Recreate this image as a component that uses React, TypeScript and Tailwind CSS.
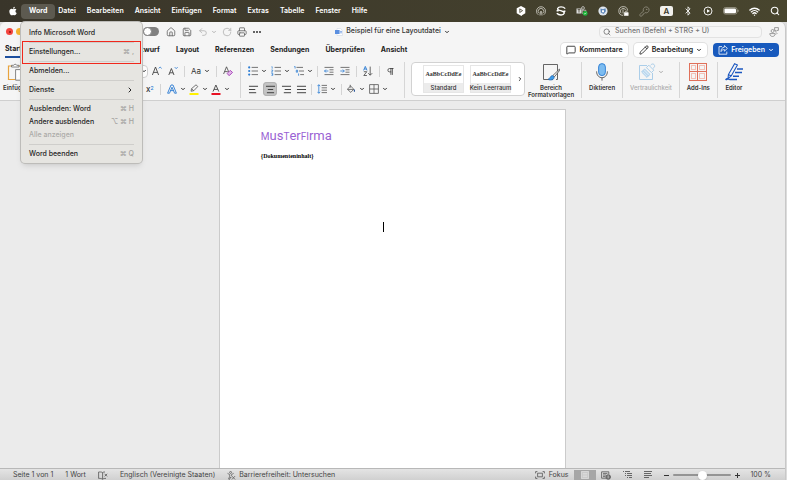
import type { ReactNode } from "react";
import {
  AlignCenter,
  AlignJustify,
  AlignLeft,
  AlignRight,
  Bluetooth,
  ChevronDown,
  ChevronRight,
  House,
  KeyRound,
  MessageSquare,
  Pencil,
  Pilcrow,
  Printer,
  RotateCw,
  Save,
  Search,
  Undo2,
  Wifi,
} from "lucide-react";
import { FaApple } from "react-icons/fa";

const menus = [
  "Datei",
  "Bearbeiten",
  "Ansicht",
  "Einfügen",
  "Format",
  "Extras",
  "Tabelle",
  "Fenster",
  "Hilfe",
];

const tabs = [
  "Einfügen",
  "Zeichnen",
  "Entwurf",
  "Layout",
  "Referenzen",
  "Sendungen",
  "Überprüfen",
  "Ansicht",
];

type WordMenuItem = {
  label: string;
  keys?: string;
  submenu?: boolean;
  disabled?: boolean;
  marked?: boolean;
};

const wordMenu: WordMenuItem[][] = [
  [{ label: "Info Microsoft Word" }],
  [{ label: "Einstellungen...", keys: "⌘ ,", marked: true }],
  [{ label: "Abmelden..." }],
  [{ label: "Dienste", submenu: true }],
  [
    { label: "Ausblenden: Word", keys: "⌘ H" },
    { label: "Andere ausblenden", keys: "⌥ ⌘ H" },
    { label: "Alle anzeigen", disabled: true },
  ],
  [{ label: "Word beenden", keys: "⌘ Q" }],
];

function Chevron() {
  return <ChevronDown className="size-[6px] shrink-0" strokeWidth={4} />;
}

function Tool({
  label,
  menu,
  active,
  children,
}: {
  label: string;
  menu?: boolean;
  active?: boolean;
  children: ReactNode;
}) {
  return (
    <button
      type="button"
      aria-label={label}
      className={
        active
          ? "flex h-[14px] w-[14px] shrink-0 items-center justify-center rounded-sm bg-[#c4c4c4] ring-1 ring-inset ring-[#b2b2b2]"
          : "flex h-[14px] shrink-0 items-center gap-[3px]"
      }
    >
      {children}
      {menu ? <Chevron /> : null}
    </button>
  );
}

function Divider() {
  return <span className="h-[11px] w-px shrink-0 bg-[#d4d4d4]" />;
}

function GroupDivider() {
  return <span className="h-[36px] w-px shrink-0 bg-[#d6d6d6]" />;
}

function ListIcon({ kind }: { kind: "bullet" | "number" | "multi" }) {
  return (
    <svg viewBox="0 0 10 10" className="size-[10px]" fill="none">
      {kind === "bullet" ? (
        <g fill="#2b7cd3">
          <circle cx="1.2" cy="1.4" r="1.1" />
          <circle cx="1.2" cy="5" r="1.1" />
          <circle cx="1.2" cy="8.6" r="1.1" />
        </g>
      ) : null}
      {kind === "number" ? (
        <g stroke="#2b7cd3" strokeWidth=".7">
          <path d="M.6.7h.6v2M.3 4h1.4v1L.4 6h1.5M.4 7.4h1.4v2H.4m.5-1h.9" />
        </g>
      ) : null}
      {kind === "multi" ? (
        <g stroke="#2b7cd3" strokeWidth=".8">
          <path d="M.3.5h.8v2M2.3 4.2h1.3v2H2.3zM4.6 7.5v2.2" />
        </g>
      ) : null}
      {kind === "multi" ? (
        <path d="M2.5 1.4H9M5 5h5M6.2 8.6H10" stroke="#555" strokeWidth=".8" />
      ) : (
        <path d="M3.6 1.4H10M3.6 5H10M3.6 8.6H10" stroke="#555" strokeWidth=".8" />
      )}
    </svg>
  );
}

function IndentIcon({ increase }: { increase?: boolean }) {
  return (
    <svg viewBox="0 0 10 10" className="size-[10px]" fill="none" strokeWidth=".8">
      <path d="M.5 1.4h9M5.5 3.8h4M5.5 6.2h4M.5 8.6h9" stroke="#555" />
      <path
        d={increase ? "M.3 5h4M2.8 3.5 4.3 5 2.8 6.5" : "M4.4 5H.5M2 3.5.5 5 2 6.5"}
        stroke="#2b7cd3"
      />
    </svg>
  );
}

function FontSizeIcon({ down }: { down?: boolean }) {
  return (
    <svg viewBox="0 0 10 10" className="size-[10px]" fill="none">
      <path
        d={down ? "M.8 9 3.4 2.5 6 9M1.7 6.8h3.4" : "M.4 9 3.5 1 6.6 9M1.5 6.4h4"}
        stroke="#444"
        strokeWidth=".9"
      />
      <path
        d={down ? "M6.8 1.2 8.2 2.6 9.6 1.2" : "M6.8 2.4 8.2 1 9.6 2.4"}
        stroke="#2b7cd3"
        strokeWidth=".9"
      />
    </svg>
  );
}

function ClearFormatIcon() {
  return (
    <svg viewBox="0 0 10 10" className="size-[10px]" fill="none">
      <path d="M.6 8 3.5.8 5.8 6M1.6 5.6h3.2" stroke="#444" strokeWidth=".8" />
      <path d="m4.2 7.4 3-3 2.3 2-3 3H5.8z" stroke="#a33bb5" strokeWidth=".9" fill="#e3b8ea" />
    </svg>
  );
}

function OutlineAIcon() {
  return (
    <svg viewBox="0 0 10 10" className="size-[10px]" fill="none">
      <path
        d="M.6 9.2 4 1h2l3.4 8.2H7.6L5 3.2 2.5 9.2zM3.4 6.6h3.2"
        stroke="#2b7cd3"
        strokeWidth=".9"
        strokeLinejoin="round"
      />
    </svg>
  );
}

function HighlightIcon() {
  return (
    <svg viewBox="0 0 10 11" className="h-[11px] w-[10px]" fill="none">
      <path d="m2 7.2.6-2.6L7 .8l1.8 1.7-4 4.2zM2.6 4.7l2.1 2" stroke="#555" strokeWidth=".8" />
      <path d="M.5 9h9v2h-9z" fill="#fff100" />
    </svg>
  );
}

function FontColorIcon() {
  return (
    <svg viewBox="0 0 10 11" className="h-[11px] w-[10px]" fill="none">
      <path d="M2 7.6 4.9 1l2.9 6.6M3 5.4h3.8" stroke="#444" strokeWidth=".9" />
      <path d="M.5 9h9v2h-9z" fill="#e81123" />
    </svg>
  );
}

function SortIcon() {
  return (
    <svg viewBox="0 0 10 10" className="size-[10px]" fill="none">
      <path d="M.6 4.4 2.3.4 4 4.4M1.2 3h2.2" stroke="#2b7cd3" strokeWidth=".9" />
      <path d="M.8 5.7h3L.8 9.5h3.1" stroke="#444" strokeWidth=".8" />
      <path d="M7.2.6v8.6M5.2 7.2l2 2 2-2" stroke="#444" strokeWidth=".8" />
    </svg>
  );
}

function LineSpacingIcon() {
  return (
    <svg viewBox="0 0 10 10" className="size-[10px]" fill="none" strokeWidth=".8">
      <path d="M1.8.8v8.4M.4 2.2 1.8.7l1.4 1.5M.4 7.8l1.4 1.5 1.4-1.5" stroke="#2b7cd3" />
      <path d="M4.6 1.4H10M4.6 3.8H10M4.6 6.2H10M4.6 8.6H10" stroke="#555" />
    </svg>
  );
}

function BucketIcon() {
  return (
    <svg viewBox="0 0 10 10" className="size-[10px]" fill="none">
      <path d="M4.2.8v3M1.4 5.2 4.6 2l3.2 3.2-3 3.2zM1.6 5.4h6" stroke="#555" strokeWidth=".8" />
      <path d="M8.4 5c.8 1.2 1 2.8 0 2.9-1 0-.8-1.7 0-2.9" fill="#2b579a" />
    </svg>
  );
}

function BordersIcon() {
  return (
    <svg viewBox="0 0 10 10" className="size-[10px]" fill="none" stroke="#555" strokeWidth=".8">
      <path d="M.6.6h8.8v8.8H.6zM5 .6v8.8M.6 5h8.8" />
    </svg>
  );
}

function PasteIcon() {
  return (
    <svg viewBox="0 0 18 18" className="size-[18px]" fill="none">
      <path d="M6 3H1.5v13.5H8M12 3h3v3" stroke="#e8a33d" strokeWidth="1.2" />
      <path d="M4.5 4V2.3h2.2a1.6 1.6 0 0 1 3 0H12V4z" fill="#fff" stroke="#666" strokeWidth=".8" />
      <path d="M8.6 6.6h8.4v10.6H8.6z" fill="#fff" stroke="#666" strokeWidth=".8" />
    </svg>
  );
}

function StylesPaneIcon() {
  return (
    <svg viewBox="0 0 18 18" className="size-[18px]" fill="none">
      <path d="M11 16.5H1.5v-15h14v15H14" stroke="#555" strokeWidth=".9" />
      <path d="M17.4 6.2 11 12.4l1.4 1.4 5.4-6.6z" fill="#fff" stroke="#444" strokeWidth=".8" />
      <path d="M10.6 12.6c-2.3-.2-2 2.8-4.6 3.7 2.2 1.6 6.4.6 6.2-2.2z" fill="#3d9be9" stroke="#1f5fa8" strokeWidth=".6" />
    </svg>
  );
}

function DictateIcon() {
  return (
    <svg viewBox="0 0 18 18" className="size-[18px]" fill="none">
      <rect x="5.6" y=".6" width="6.8" height="12" rx="3.4" fill="#7cbcf0" stroke="#2b7cd3" strokeWidth=".9" />
      <path d="M3.6 8.4c0 8.4 10.8 8.4 10.8 0M9 14.8v2.8" stroke="#555" strokeWidth=".9" />
    </svg>
  );
}

function SensitivityIcon() {
  return (
    <svg viewBox="0 0 18 18" className="size-[18px]" fill="none" stroke="#a3c9e8" strokeWidth=".9">
      <path d="M9 2.5H1.5v14h13V10" />
      <path d="m3.6 9 3-3 5.4 5.4-3 3zM5 7.6l5.4 5.4" fill="#d6e8f6" />
      <path d="m8.4 4.6 2.4-2.4 5 5-2.4 2.4zM12.6 2.4c1-2 3.6-1.8 4 .2.2 1.4-.6 2.2-1.6 2.6" />
    </svg>
  );
}

function AddInsIcon() {
  return (
    <svg
      viewBox="0 0 18 18"
      className="size-[18px]"
      fill="none"
      stroke="#e0705a"
      shapeRendering="crispEdges"
    >
      <path d="M.5.5h17v17H.5zM8.5.5v17M.5 8.5h17" />
      <path
        d="M2.5 2.5h4v4h-4zM10.5 2.5h5v4h-5zM2.5 10.5h4v5h-4zM10.5 10.5h5v5h-5z"
        stroke="#f3c0b5"
      />
    </svg>
  );
}

function EditorIcon() {
  return (
    <svg viewBox="0 0 18 18" className="size-[18px]" fill="none" stroke="#1b57c0">
      <path d="M9.6.8 12.4 2 6.2 13 3 15.6 3.4 11.6zM3.4 11.6 6.2 13" strokeWidth="1.1" />
      <path d="M12 6h6M10 9.6h7M8 13.2h6M.6 17c2-2.6 3-.2 4.4-.4H12" strokeWidth="1.5" />
    </svg>
  );
}

function MenuExtras() {
  return (
    <div className="flex items-center gap-[10px] pr-[7px] text-white">
      <svg viewBox="0 0 10 10" className="size-[10px]">
        <path d="M5 0 9.3 2.3v5L6 9.2 5.8 10 4.6 9.6.7 7.3v-5z" fill="#fff" />
        <path d="m3.6 2.8 3 1.8-3 2M3.8 3v3.4" stroke="#45412f" fill="none" strokeWidth=".8" />
      </svg>
      <svg viewBox="0 0 10 10" className="size-[10px]" fill="none" stroke="#e8e6df" strokeWidth=".7">
        <path d="M2.3 8.8a4.5 4.5 0 1 1 5.4 0M3.2 7.3a2.8 2.8 0 1 1 3.6 0M4 9.5l.5-4h1l.5 4" />
      </svg>
      <svg viewBox="0 0 10 10" className="size-[10px]" fill="none" stroke="#fff" strokeWidth="1.4">
        <path d="M9.2 2.6C7.2.2 2.6.4 1.6 2.5c-.8 2 7.2 2.4 6.7 4.6C7.5 9.6 3 9.6.8 7.3M.6 4.8h2M7.4 5.2h2" />
      </svg>
      <svg viewBox="0 0 12 10" className="h-[10px] w-[12px]">
        <path d="M.5 2.5h5v5h-5z" fill="#ddd" />
        <path d="M1.6 3.6h2.8M3 3.6v3" stroke="#45412f" strokeWidth=".8" />
        <circle cx="7" cy="2" r="1.4" fill="none" stroke="#ddd" strokeWidth=".7" />
        <path d="M6.2 4.2h3.6v2c0 2.8-3.6 2.8-3.6 0z" fill="none" stroke="#ddd" strokeWidth=".7" />
        <circle cx="9.2" cy="7.4" r="2.4" fill="#1eb53a" />
        <path d="m8.2 7.4.8.8 1.3-1.5" stroke="#fff" fill="none" strokeWidth=".6" />
      </svg>
      <svg viewBox="0 0 10 10" className="size-[10px]">
        <circle cx="5" cy="5" r="4.6" fill="#dfe6ee" />
        <path d="M2.4 2.4 5 3.2l2.5-.9.4 3L5.6 8 2.8 6.6z" fill="#5d86b8" />
        <path d="M4 4.2h2v2H4z" fill="#fff" />
      </svg>
      <svg viewBox="0 0 11 10" className="h-[10px] w-[11px]" fill="none" stroke="#e8e6df" strokeWidth=".7">
        <path d="M5 9.4A4.4 4.4 0 1 1 9.6 4.6M3.2 7.2a2.8 2.8 0 1 1 4.6-3M5 3.4v4" />
        <path d="M6.2 6.6h4v3h-4z" fill="#fff" />
        <path d="M7 6.4c0-1.8 2.4-1.8 2.4 0" />
      </svg>
      <KeyRound className="size-[11px] text-[#8b8878]" />
      <span className="flex h-[10px] w-[13px] items-center justify-center rounded-[2px] bg-[#f1f0ec] text-[8px] font-semibold text-[#3c3829]">
        A
      </span>
      <Bluetooth className="size-[10px]" />
      <svg viewBox="0 0 10 10" className="size-[10px]" fill="none" stroke="#fff" strokeWidth=".9">
        <circle cx="5" cy="5" r="4" />
        <path d="M4 3.2 7 5 4 6.8z" fill="#fff" stroke="none" />
      </svg>
      <svg viewBox="0 0 16 8" className="h-[8px] w-[16px]" fill="none">
        <rect x=".5" y=".5" width="13.5" height="6.6" rx="2" stroke="#aaa899" strokeWidth=".7" />
        <rect x="1.4" y="1.4" width="11.6" height="4.8" rx="1.2" fill="#fff" />
        <path d="M15 2.8v2" stroke="#aaa899" />
      </svg>
      <Wifi className="size-[11px]" strokeWidth={3} />
      <Search className="size-[10px]" strokeWidth={2.5} />
    </div>
  );
}

function MenuBar() {
  return (
    <header className="flex h-[22px] shrink-0 items-center justify-between bg-linear-to-r from-[#39352a] to-[#48452e] text-[7px] font-semibold text-white">
      <nav className="flex items-center pl-[8px]">
        <FaApple className="mr-[3px] size-[10px]" />
        <div className="relative">
          <button type="button" className="h-[15px] rounded-sm bg-[#5d5a50] px-[8px] font-bold">
            Word
          </button>
          <WordMenu />
        </div>
        <div className="flex gap-[11px] pl-[3px]">
          {menus.map((menu) => (
            <button key={menu} type="button">
              {menu}
            </button>
          ))}
        </div>
      </nav>
      <MenuExtras />
    </header>
  );
}

function WordMenu() {
  return (
    <div
      role="menu"
      className="absolute top-[18px] left-0 z-10 w-[121px] rounded-sm bg-[#e6e5e1] pt-[5px] pb-[2px] font-medium text-[#262626] shadow-md ring-1 ring-[#bdbcb9]"
    >
      {wordMenu.map((group, index) => (
        <div key={group[0].label}>
          {index > 0 ? (
            <div className="flex h-[6px] items-center px-[8px]">
              <span className="h-px w-full bg-[#cfcecb]" />
            </div>
          ) : null}
          {group.map((item) => (
            <button
              key={item.label}
              type="button"
              role="menuitem"
              disabled={item.disabled}
              className="relative flex h-[13px] w-full items-center justify-between px-[8px] disabled:text-[#acaba8]"
            >
              <span>{item.label}</span>
              {item.keys ? <span className="text-[#a3a29f]">{item.keys}</span> : null}
              {item.submenu ? <ChevronRight className="size-[8px]" strokeWidth={3} /> : null}
              {item.marked ? (
                <span className="absolute inset-x-px -inset-y-[5px] border border-[#f0281c]" />
              ) : null}
            </button>
          ))}
        </div>
      ))}
    </div>
  );
}

function TitleBar() {
  return (
    <div className="grid h-[19px] shrink-0 grid-cols-[1fr_auto_1fr] items-center text-[7px]">
      <div className="flex items-center pl-[6px] text-[#666]">
        <span className="mr-[3px] flex size-[7px] items-center justify-center rounded-full bg-[#f4443e]">
          <span className="size-[2px] rounded-full bg-[#8c1a10]" />
        </span>
        <span className="mr-[3px] size-[7px] rounded-full bg-[#f5b32e]" />
        <span className="size-[7px] rounded-full bg-[#34c748]" />
        <input
          type="checkbox"
          aria-label="Automatisches Speichern"
          className="ml-[110px] h-[9px] w-[16px] appearance-none rounded-full bg-[#808080] before:block before:size-[9px] before:rounded-full before:border before:border-[#808080] before:bg-white"
        />
        <button type="button" aria-label="Start" className="ml-[7px]">
          <House className="size-[10px]" />
        </button>
        <button type="button" aria-label="Speichern" className="ml-[6px]">
          <Save className="size-[10px]" />
        </button>
        <button type="button" aria-label="Rückgängig" className="ml-[6px] flex items-center gap-[3px] text-[#b5b5b5]">
          <Undo2 className="size-[10px]" />
          <Chevron />
        </button>
        <button type="button" aria-label="Wiederholen" className="ml-[5px] text-[#b5b5b5]">
          <RotateCw className="size-[10px]" />
        </button>
        <button type="button" aria-label="Drucken" className="ml-[5px]">
          <Printer className="size-[10px]" />
        </button>
        <button type="button" aria-label="Mehr" className="ml-[6px] flex gap-[1px]">
          <span className="size-[2px] rounded-full bg-[#333]" />
          <span className="size-[2px] rounded-full bg-[#333]" />
          <span className="size-[2px] rounded-full bg-[#333]" />
        </button>
      </div>
      <button type="button" className="flex items-center gap-[3px] font-medium text-[#333]">
        <svg viewBox="0 0 8 8" className="size-[8px]">
          <path d="M2 .5h3.6l1.9 2v5H2z" fill="#fff" stroke="#c9d3e2" strokeWidth=".5" />
          <path d="M0 2h4.6v4H0z" fill="#5b8fe0" />
          <path d="M5 3.4h2M5 4.8h2" stroke="#5b8fe0" strokeWidth=".7" />
        </svg>
        Beispiel für eine Layoutdatei
        <Chevron />
      </button>
      <div className="flex items-center justify-end gap-[7px] pr-[6px]">
        <label className="flex h-[12px] w-[163px] items-center gap-[4px] rounded-sm border border-[#e2e2e2] bg-[#f6f6f6] px-[3px] text-[#555]">
          <Search className="size-[8px]" />
          <input
            type="search"
            aria-label="Suchen"
            placeholder="Suchen (Befehl + STRG + U)"
            className="min-w-0 flex-1 bg-transparent font-medium outline-none placeholder:text-[#777]"
          />
        </label>
        <svg viewBox="0 0 10 10" className="size-[10px]" fill="none" stroke="#777" strokeWidth=".7">
          <circle cx="3.6" cy="4" r="1.5" />
          <path d="M.8 6.6h5.4c0 3.8-5.4 3.8-5.4 0M5.6.6h3.8v2.8H8L6.8 4.6V3.4H5.6zM7 5.4l1 1-1 1" />
        </svg>
      </div>
    </div>
  );
}

function TabBar() {
  return (
    <div className="flex h-[18px] shrink-0 items-center justify-between pr-[6px] pl-[5px] text-[7px] font-semibold text-[#222]">
      <div className="flex gap-[16px]">
        <button type="button" className="border-b-2 border-[#1d4f9f] pt-[2px] pb-px font-bold">
          Start
        </button>
        {tabs.map((tab) => (
          <button key={tab} type="button" className="font-bold">
            {tab}
          </button>
        ))}
      </div>
      <div className="flex gap-[6px]">
        <button type="button" className="flex h-[14px] items-center gap-[3px] rounded-sm bg-white px-[5px] ring-1 ring-[#e0e0e0]">
          <MessageSquare className="size-[10px]" />
          Kommentare
        </button>
        <button type="button" className="flex h-[14px] items-center gap-[3px] rounded-sm bg-white px-[5px] ring-1 ring-[#e0e0e0]">
          <Pencil className="size-[10px]" />
          Bearbeitung
          <Chevron />
        </button>
        <button type="button" className="flex h-[14px] items-center gap-[3px] rounded-sm bg-[#185abd] px-[5px] text-white">
          <svg viewBox="0 0 10 10" className="size-[10px]" fill="none" stroke="#fff" strokeWidth=".8">
            <path d="M4 1.6H1v7.6h7.8V6.6" />
            <path d="M6.4.6 9.4 3.4l-3 2.8V4.6C4.6 4.6 3.8 5.2 3 6.6c0-2.6 1.2-4.2 3.4-4.4z" />
          </svg>
          Freigeben
          <Chevron />
        </button>
      </div>
    </div>
  );
}

function BigTool({
  label,
  icon,
  menu,
  disabled,
}: {
  label: string;
  icon: ReactNode;
  menu?: boolean;
  disabled?: boolean;
}) {
  return (
    <button
      type="button"
      disabled={disabled}
      className="flex h-[37px] flex-col items-center gap-[3px] pt-px text-[6px] leading-[7px] font-semibold whitespace-pre-line text-[#333] disabled:font-medium disabled:text-[#aaa]"
    >
      <span className="flex items-center gap-[2px]">
        {icon}
        {menu ? <Chevron /> : null}
      </span>
      {label}
    </button>
  );
}

function StyleCard({ name }: { name: string }) {
  return (
    <button
      type="button"
      className="flex h-[28px] w-[41px] shrink-0 flex-col border border-[#e6e6e6] bg-white"
    >
      <span className="flex w-full flex-1 items-center justify-center font-['Liberation_Serif',serif] text-[6px] font-bold">
        AaBbCcDdEe
      </span>
      <span className="flex h-[9px] w-full items-center justify-center bg-[#ececec] text-[6px] font-medium whitespace-nowrap">
        {name}
      </span>
    </button>
  );
}

function Ribbon() {
  return (
    <div className="flex shrink-0 items-start border-b border-[#cfcfcf] pt-[3px] pb-px text-[#333]">
      <div className="flex w-[32px] justify-center">
        <BigTool label="Einfügen" icon={<PasteIcon />} />
      </div>

      <div className="flex w-[208px] flex-col gap-[4px] pt-[2px]">
        <div className="flex items-center">
          <select
            aria-label="Schriftart"
            className="h-[13px] w-[116px] appearance-none rounded-sm border border-[#cfcfcf] bg-white px-[3px] text-[7px]"
          >
            <option>Times New Roman</option>
          </select>
          <span className="-ml-[7px] mr-[4px] w-[7px]">
            <Chevron />
          </span>
          <div className="flex items-center gap-[6px]">
            <Tool label="Schrift vergrößern">
              <FontSizeIcon />
            </Tool>
            <Tool label="Schrift verkleinern">
              <FontSizeIcon down />
            </Tool>
            <Divider />
            <Tool label="Groß-/Kleinschreibung" menu>
              <span className="text-[8px]">Aa</span>
            </Tool>
            <Divider />
            <Tool label="Formatierung löschen">
              <ClearFormatIcon />
            </Tool>
          </div>
        </div>
        <div className="flex items-center gap-[6px] pl-[114px]">
          <Tool label="Hochgestellt">
            <span className="text-[8px] font-medium">
              x<sup className="text-[5px] text-[#2b7cd3]">2</sup>
            </span>
          </Tool>
          <Divider />
          <div className="flex gap-[3px]">
            <Tool label="Texteffekte" menu>
              <OutlineAIcon />
            </Tool>
            <Tool label="Texthervorhebung" menu>
              <HighlightIcon />
            </Tool>
            <Tool label="Schriftfarbe" menu>
              <FontColorIcon />
            </Tool>
          </div>
        </div>
      </div>

      <GroupDivider />
      <div className="flex w-[163px] flex-col gap-[4px] pt-[2px] pl-[7px]">
        <div className="flex items-center gap-[4px]">
          <Tool label="Aufzählungszeichen" menu>
            <ListIcon kind="bullet" />
          </Tool>
          <Tool label="Nummerierung" menu>
            <ListIcon kind="number" />
          </Tool>
          <Tool label="Liste mit mehreren Ebenen" menu>
            <ListIcon kind="multi" />
          </Tool>
          <div className="flex items-center gap-[6px]">
            <Divider />
            <Tool label="Einzug verkleinern">
              <IndentIcon />
            </Tool>
            <Tool label="Einzug vergrößern">
              <IndentIcon increase />
            </Tool>
            <Divider />
            <Tool label="Sortieren">
              <SortIcon />
            </Tool>
            <Divider />
            <Tool label="Formatierungszeichen anzeigen">
              <Pilcrow className="size-[9px]" />
            </Tool>
          </div>
        </div>
        <div className="flex items-center gap-[4px]">
          <Tool label="Linksbündig">
            <AlignLeft className="size-[11px]" />
          </Tool>
          <Tool label="Zentriert" active>
            <AlignCenter className="size-[11px]" />
          </Tool>
          <Tool label="Rechtsbündig">
            <AlignRight className="size-[11px]" />
          </Tool>
          <Tool label="Blocksatz">
            <AlignJustify className="size-[11px]" />
          </Tool>
          <div className="flex items-center gap-[5px]">
            <Divider />
            <Tool label="Zeilenabstand" menu>
              <LineSpacingIcon />
            </Tool>
            <Divider />
          </div>
          <Tool label="Schattierung" menu>
            <BucketIcon />
          </Tool>
          <Tool label="Rahmen" menu>
            <BordersIcon />
          </Tool>
        </div>
      </div>

      <GroupDivider />
      <div className="ml-[6px] flex h-[34px] w-[114px] items-center justify-end gap-[6px] rounded-sm border border-[#d2d2d2] bg-white pr-px">
        <StyleCard name="Standard" />
        <StyleCard name="Kein Leerraum" />
        <button type="button" aria-label="Weitere Formatvorlagen">
          <ChevronRight className="size-[6px]" strokeWidth={4} />
        </button>
      </div>

      <div className="flex flex-1 items-start justify-between pr-[42px] pl-[3px]">
        <BigTool label={"Bereich\nFormatvorlagen"} icon={<StylesPaneIcon />} />
        <GroupDivider />
        <BigTool label="Diktieren" icon={<DictateIcon />} />
        <GroupDivider />
        <BigTool label="Vertraulichkeit" icon={<SensitivityIcon />} menu disabled />
        <GroupDivider />
        <BigTool label="Add-Ins" icon={<AddInsIcon />} />
        <GroupDivider />
        <BigTool label="Editor" icon={<EditorIcon />} />
      </div>
    </div>
  );
}

function DocumentArea() {
  return (
    <main className="flex min-h-0 flex-1 justify-center overflow-hidden bg-[#ebebeb] pt-[9px]">
      <article className="relative w-[44%] bg-white px-[41px] pt-[18px] ring-1 ring-[#cbcbcb]">
        <h1 className="flex items-baseline font-['Roboto',sans-serif] text-[13px] leading-[16px] text-[#9a62d4]">
          <span className="text-[10px]">M</span>us<span className="text-[10px]">T</span>er
          <span className="text-[10px]">FI</span>rma
        </h1>
        <p className="mt-[6px] font-['Liberation_Serif',serif] text-[6px] leading-[10px] font-bold text-black">
          {"{Dokumenteninhalt}"}
        </p>
        <span className="absolute top-[112px] left-[163px] h-[10px] w-px bg-black" />
      </article>
    </main>
  );
}

function StatusBar() {
  return (
    <footer className="flex h-[12px] shrink-0 items-center justify-between border-t border-[#b8b8b8] bg-linear-to-b from-[#e4e4e4] to-[#d0d0d0] pt-px pr-[14px] pl-[13px] text-[7px] text-[#444]">
      <div className="flex items-center gap-[12px]">
        <span>Seite 1 von 1</span>
        <span>1 Wort</span>
        <svg viewBox="0 0 10 9" className="h-[9px] w-[10px]" fill="none" stroke="#555" strokeWidth=".8">
          <path d="M4.6 1.6C3.4.8 2 1 .6 1v6.4c1.6 0 2.8 0 4 .8 1-.8 2-.8 3.4-.8M4.6 1.6v6.6M4.6 1.6C5.4 1 6 1 7 1M6.6 2.8l2.6 2.6M9.2 2.8 6.6 5.4" />
        </svg>
        <span>Englisch (Vereinigte Staaten)</span>
        <button type="button" className="flex items-center gap-[3px]">
          <svg viewBox="0 0 10 10" className="size-[9px]" fill="none" stroke="#555" strokeWidth=".8">
            <circle cx="4" cy="1.6" r="1.1" />
            <path d="M.6 2.6 3 4v1.8L1.8 9l1 .4L4 6.8l.8 1M7.4 2.6 5 4v1.4" />
            <path d="m5.4 5.6 3.6 3.8M9 5.6 5.4 9.4" />
          </svg>
          Barrierefreiheit: Untersuchen
        </button>
      </div>
      <div className="flex items-center">
        <button type="button" className="mr-[6px] flex items-center gap-[4px]">
          <svg viewBox="0 0 10 8" className="h-[8px] w-[10px]" fill="none" stroke="#555" strokeWidth=".8">
            <path d="M.6 2.4V.6h1.8M7.6.6h1.8v1.8M9.4 5.6v1.8H7.6M2.4 7.4H.6V5.6M2.6 2.2h4.8v3.6H2.6z" />
          </svg>
          Fokus
        </button>
        <button type="button" aria-label="Drucklayout" className="flex h-[11px] w-[22px] items-center justify-center bg-[#a6a6a6]">
          <svg viewBox="0 0 8 8" className="size-[8px]">
            <path d="M.4.4h7.2v7.2H.4z" fill="#c9c9c9" stroke="#e6e6e6" strokeWidth=".7" />
            <path d="M1.8 2.4h4.4M1.8 4h4.4M1.8 5.6h4.4" stroke="#e6e6e6" strokeWidth=".6" />
          </svg>
        </button>
        <button type="button" aria-label="Weblayout" className="ml-[5px]">
          <svg viewBox="0 0 10 9" className="h-[9px] w-[10px]" fill="none" stroke="#555" strokeWidth=".8">
            <path d="M5 7.2H.6V.8h7.2v2.4M2 2.4h4.4M2 4h3M2 5.6h2.4" />
            <circle cx="7.2" cy="6" r="2.3" fill="#777" />
            <path d="M7.2 4.4v3" stroke="#ddd" strokeWidth=".6" />
          </svg>
        </button>
        <button type="button" aria-label="Gliederung" className="ml-[12px]">
          <svg viewBox="0 0 9 8" className="h-[8px] w-[9px]" fill="none" stroke="#666" shapeRendering="crispEdges">
            <path d="M0 .5h1M2 .5h5M2 2.5h1M4 2.5h5M2 4.5h1M4 4.5h5M4 6.5h1M6 6.5h3" />
          </svg>
        </button>
        <button type="button" aria-label="Entwurfsansicht" className="ml-[12px]">
          <svg viewBox="0 0 9 8" className="h-[8px] w-[9px]" fill="none" stroke="#666" shapeRendering="crispEdges">
            <path d="M0 .5h8M0 2.5h7M0 4.5h8M0 6.5h5" />
          </svg>
        </button>
        <button type="button" aria-label="Verkleinern" className="ml-[11px] flex h-[9px] w-[5px] items-center">
          <span className="h-px w-full bg-[#333]" />
        </button>
        <input
          type="range"
          aria-label="Zoom"
          defaultValue={50}
          className="mx-[4px] h-[2px] w-[58px] appearance-none rounded-full bg-[#949494] [&::-webkit-slider-thumb]:size-[9px] [&::-webkit-slider-thumb]:appearance-none [&::-webkit-slider-thumb]:rounded-full [&::-webkit-slider-thumb]:bg-white [&::-webkit-slider-thumb]:shadow-sm"
        />
        <button type="button" aria-label="Vergrößern">
          <svg viewBox="0 0 5 5" className="size-[5px]" stroke="#333" strokeWidth="1">
            <path d="M0 2.5h5M2.5 0v5" />
          </svg>
        </button>
        <span className="ml-[10px]">100 %</span>
      </div>
    </footer>
  );
}

export default function App() {
  return (
    <div className="flex h-screen flex-col bg-[#dcdcdc] font-['Inter',sans-serif]">
      <MenuBar />
      <div className="mr-px flex min-h-0 flex-1 flex-col overflow-hidden rounded-t-md border-r border-[#c8c8c8] bg-[#f5f5f5]">
        <TitleBar />
        <TabBar />
        <Ribbon />
        <DocumentArea />
        <StatusBar />
      </div>
    </div>
  );
}
